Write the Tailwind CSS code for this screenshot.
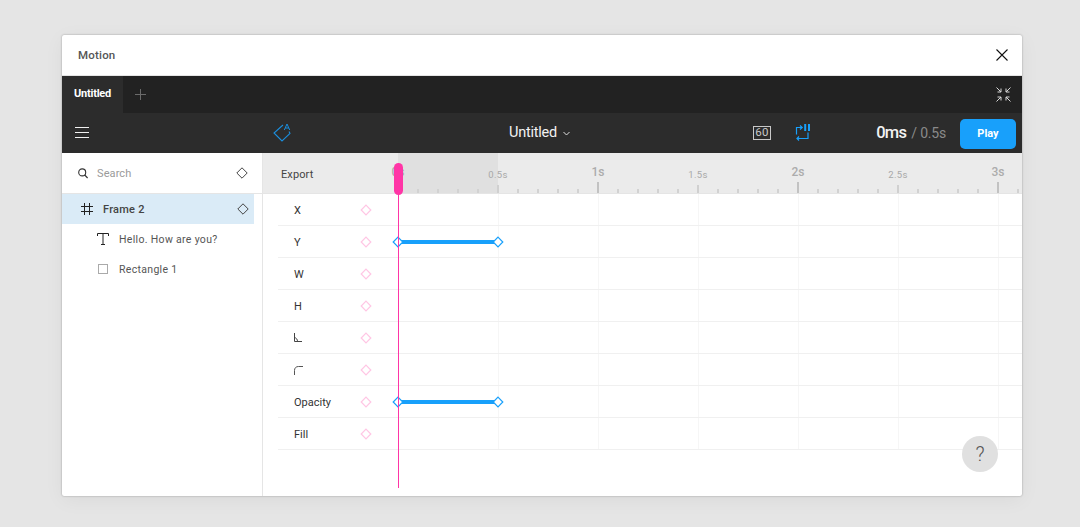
<!doctype html>
<html>
<head>
<meta charset="utf-8">
<script src="https://cdn.jsdelivr.net/npm/@tailwindcss/browser@4"></script>
</head>
<body class="m-0 w-[1080px] h-[527px] overflow-hidden bg-[#e5e5e5] font-['Roboto','Liberation_Sans',sans-serif]">
<div class="pt-[35px] pl-[62px]">
<div class="w-[960px] h-[461px] bg-white flex flex-col shadow-[0_0_2px_rgba(0,0,0,0.35),0_4px_20px_rgba(0,0,0,0.05)] rounded-[2px] overflow-hidden">
  <!-- title -->
  <div class="h-[41px] shrink-0 flex items-center justify-between pl-4 pr-[14px] border-b border-[#e5e5e5]">
    <span class="mt-[1px] text-[11.5px] font-medium text-[#555] tracking-[0.2px]">Motion</span>
    <svg class="w-[12px] h-[12px]" viewBox="0 0 12 12" fill="none" stroke="#111" stroke-width="1.1"><path d="M0.5 0.5L11.5 11.5M11.5 0.5L0.5 11.5"/></svg>
  </div>
  <!-- tabs -->
  <div class="h-[37px] shrink-0 bg-[#222222] flex items-center">
    <div class="h-full w-[61px] bg-[#2c2c2c] flex items-center justify-center text-white text-[11px] font-bold tracking-[-0.2px]">Untitled</div>
    <svg class="w-[11px] h-[11px] ml-[12px]" viewBox="0 0 11 11" stroke="#6b6b6b" stroke-width="1"><path d="M5.5 0V11M0 5.5H11"/></svg>
    <svg class="w-[15px] h-[15px] ml-auto mr-[11px]" viewBox="0 0 15 15" fill="none" stroke="#d8d8d8" stroke-width="1"><path d="M0.5 0.5L5 5M5 1.5V5H1.5M14.5 0.5L10 5M10 1.5V5H13.5M0.5 14.5L5 10M5 13.5V10H1.5M14.5 14.5L10 10M10 13.5V10H13.5"/></svg>
  </div>
  <!-- toolbar -->
  <div class="h-[40px] shrink-0 bg-[#2c2c2c] flex items-center relative">
    <svg class="absolute left-[13px] top-[14px] w-[14px] h-[11px]" viewBox="0 0 14 11" stroke="#f0f0f0" stroke-width="1"><path d="M0 0.5H14M0 5.5H14M0 10.5H14"/></svg>
    <svg class="absolute left-[210px] top-[8px] w-[20px] h-[22px]" viewBox="0 0 20 22" fill="none" stroke="#1b8ddb" stroke-width="1.1"><path d="M11 4L2 12L10 20L18 12.5L17 10.5"/><path d="M12.3 9L15 3L17.7 9M13.3 7H16.7" stroke-width="1"/></svg>
    <div class="absolute left-[447px] top-0 h-full flex items-center gap-[6px] text-white">
      <span class="text-[14.5px] tracking-[-0.25px] text-[#f2f2f2]">Untitled</span>
      <svg class="w-[7px] h-[5px]" viewBox="0 0 7 5" fill="none" stroke="#ddd" stroke-width="1"><path d="M0.5 1L3.5 4L6.5 1"/></svg>
    </div>
    <div class="absolute left-[691px] top-[13px] w-[18px] h-[14px] border border-[#c8c8c8] flex items-center justify-center text-[11.5px] text-[#c8c8c8] leading-none tracking-[0.4px]">60</div>
    <svg class="absolute left-[733px] top-[10px] w-[16px] h-[19px]" viewBox="0 0 16 19" fill="none" stroke="#18a0fb" stroke-width="1.2"><path d="M1.5 11.5V4.5H7M5 2.5L7.2 4.5L5 6.5M13 9.5V15.5H2M4 13.5L2 15.5L4 17.5"/><path d="M10.2 1V8M14 1V8" stroke-width="2"/></svg>
    <div class="absolute right-[76px] top-0 h-full flex items-center gap-[5px]">
      <span class="text-[16.5px] font-medium text-[#f2f2f2] tracking-[-0.7px]">0ms</span>
      <span class="text-[14px] text-[#8a8a8a] tracking-[-0.2px]">/ 0.5s</span>
    </div>
    <div class="absolute left-[898px] top-[6px] w-[56px] h-[30px] rounded-[5px] bg-[#18a0fb] flex items-center justify-center text-white text-[11px] font-bold">Play</div>
  </div>
  <!-- body -->
  <div class="flex-1 flex min-h-0">
    <!-- layers -->
    <div class="w-[201px] shrink-0 border-r border-[#e5e5e5]">
      <div class="h-[41px] flex items-center border-b border-[#e5e5e5] relative">
        <svg class="absolute left-[16px] top-[15px] w-[10px] h-[11px]" viewBox="0 0 10 11" fill="none" stroke="#333" stroke-width="1.1"><circle cx="4.2" cy="4.4" r="3.5"/><path d="M6.7 7L9.6 10"/></svg>
        <span class="ml-[35px] mt-[2px] text-[11px] text-[#9a9a9a] tracking-[0.1px]">Search</span>
        <svg class="absolute left-[174px] top-[14px] w-[12px] h-[12px]" viewBox="0 0 12 12" fill="none" stroke="#444" stroke-width="1"><path d="M6 0.8L11.2 6L6 11.2L0.8 6Z"/></svg>
      </div>
      <div class="w-[192px] h-[30px] bg-[#daebf7] flex items-center relative">
        <svg class="absolute left-[19px] top-[9px] w-[12px] h-[12px]" viewBox="0 0 12 12" fill="none" stroke="#222" stroke-width="1"><path d="M3.5 0V12M8.5 0V12M0 3.5H12M0 8.5H12"/></svg>
        <span class="ml-[41px] mt-[2px] text-[11px] font-medium text-[#444] tracking-[0.25px]">Frame 2</span>
        <svg class="absolute left-[175px] top-[9px] w-[12px] h-[12px]" viewBox="0 0 12 12" fill="none" stroke="#444" stroke-width="1"><path d="M6 0.8L11.2 6L6 11.2L0.8 6Z"/></svg>
      </div>
      <div class="h-[30px] flex items-center relative">
        <svg class="absolute left-[35px] top-[9px] w-[12px] h-[12px]" viewBox="0 0 12 12" fill="none" stroke="#222" stroke-width="1"><path d="M0.5 3V0.5H11.5V3M6 0.5V11.5M4 11.5H8"/></svg>
        <span class="ml-[57px] mt-[2px] text-[10.5px] text-[#555] tracking-[0.32px]">Hello. How are you?</span>
      </div>
      <div class="h-[30px] flex items-center relative">
        <div class="absolute left-[36px] top-[10px] w-[10px] h-[10px] border border-[#aaa]"></div>
        <span class="ml-[57px] mt-[2px] text-[10.5px] text-[#555] tracking-[0.32px]">Rectangle 1</span>
      </div>
    </div>
    <!-- timeline -->
    <div class="flex-1 relative min-w-0">
      <!-- ruler -->
      <div class="h-[41px] bg-[#ebebeb] border-b border-[#e5e5e5] relative">
        <span class="absolute left-[18px] top-[14px] text-[11px] text-[#444] tracking-[0.1px]">Export</span>
        <div class="absolute left-[135px] top-0 w-[100px] h-full bg-[#e0e0e0]"></div>
        <div class="absolute left-[134px] right-0 bottom-0 h-[4px] bg-[repeating-linear-gradient(90deg,#d2d2d2_0,#d2d2d2_2px,transparent_2px,transparent_20px)]"></div>
        <div class="absolute left-[234px] right-0 bottom-0 h-[8px] bg-[repeating-linear-gradient(90deg,#d0d0d0_0,#d0d0d0_2px,transparent_2px,transparent_100px)]"></div>
        <div class="absolute left-[334px] right-0 bottom-0 h-[11px] bg-[repeating-linear-gradient(90deg,#c2c2c2_0,#c2c2c2_2px,transparent_2px,transparent_200px)]"></div>
        <span class="absolute left-[125px] top-[10px] w-[20px] text-center text-[12px] font-medium text-[#acacac]">0s</span>
        <span class="absolute left-[225px] top-[15px] w-[20px] text-center text-[9.5px] text-[#a8a8a8] tracking-[0.3px]">0.5s</span>
        <span class="absolute left-[325px] top-[10px] w-[20px] text-center text-[12px] font-medium text-[#acacac]">1s</span>
        <span class="absolute left-[425px] top-[15px] w-[20px] text-center text-[9.5px] text-[#a8a8a8] tracking-[0.3px]">1.5s</span>
        <span class="absolute left-[525px] top-[10px] w-[20px] text-center text-[12px] font-medium text-[#acacac]">2s</span>
        <span class="absolute left-[625px] top-[15px] w-[20px] text-center text-[9.5px] text-[#a8a8a8] tracking-[0.3px]">2.5s</span>
        <span class="absolute left-[725px] top-[10px] w-[20px] text-center text-[12px] font-medium text-[#acacac]">3s</span>
      </div>
      <!-- rows -->
      <div class="relative pl-[15px]">
        <div class="absolute left-[235px] top-0 right-0 h-[256px] bg-[repeating-linear-gradient(90deg,#f6f6f6_0,#f6f6f6_1px,transparent_1px,transparent_100px)]"></div>
        <div class="relative h-[32px] border-b border-[#f0f0f0] flex items-center pl-[16px] pt-[4px] text-[11px] text-[#333]">X<svg class="absolute left-[82px] top-[10px] w-[12px] h-[12px]" viewBox="0 0 12 12" fill="none" stroke="#ffc6e4" stroke-width="1.2"><path d="M6 1.2L10.8 6L6 10.8L1.2 6Z"/></svg></div>
        <div class="relative h-[32px] border-b border-[#f0f0f0] flex items-center pl-[16px] pt-[4px] text-[11px] text-[#333]">Y<svg class="absolute left-[82px] top-[10px] w-[12px] h-[12px]" viewBox="0 0 12 12" fill="none" stroke="#ffc6e4" stroke-width="1.2"><path d="M6 1.2L10.8 6L6 10.8L1.2 6Z"/></svg>
          <svg class="absolute left-[114px] top-[10px] w-[112px] h-[12px]" viewBox="0 0 112 12" fill="none"><path d="M6 6H106" stroke="#18a0fb" stroke-width="4"/><path d="M6 1.2L10.8 6L6 10.8L1.2 6Z M106 1.2L110.8 6L106 10.8L101.2 6Z" fill="#fff" stroke="#18a0fb" stroke-width="1.2"/></svg></div>
        <div class="relative h-[32px] border-b border-[#f0f0f0] flex items-center pl-[16px] pt-[4px] text-[11px] text-[#333]">W<svg class="absolute left-[82px] top-[10px] w-[12px] h-[12px]" viewBox="0 0 12 12" fill="none" stroke="#ffc6e4" stroke-width="1.2"><path d="M6 1.2L10.8 6L6 10.8L1.2 6Z"/></svg></div>
        <div class="relative h-[32px] border-b border-[#f0f0f0] flex items-center pl-[16px] pt-[4px] text-[11px] text-[#333]">H<svg class="absolute left-[82px] top-[10px] w-[12px] h-[12px]" viewBox="0 0 12 12" fill="none" stroke="#ffc6e4" stroke-width="1.2"><path d="M6 1.2L10.8 6L6 10.8L1.2 6Z"/></svg></div>
        <div class="relative h-[32px] border-b border-[#f0f0f0] flex items-center pl-[16px]"><svg class="w-[8px] h-[9px]" viewBox="0 0 8 9" fill="none" stroke="#444" stroke-width="1"><path d="M0.5 0V8.5H8M0.5 4.5C2.5 5 3.5 6.5 3.5 8.5"/></svg><svg class="absolute left-[82px] top-[10px] w-[12px] h-[12px]" viewBox="0 0 12 12" fill="none" stroke="#ffc6e4" stroke-width="1.2"><path d="M6 1.2L10.8 6L6 10.8L1.2 6Z"/></svg></div>
        <div class="relative h-[32px] border-b border-[#f0f0f0] flex items-center pl-[16px] pt-[1px]"><svg class="w-[9px] h-[9px]" viewBox="0 0 9 9" fill="none" stroke="#555" stroke-width="1"><path d="M0.5 9V4.5C0.5 2 2 0.5 4.5 0.5H9"/></svg><svg class="absolute left-[82px] top-[10px] w-[12px] h-[12px]" viewBox="0 0 12 12" fill="none" stroke="#ffc6e4" stroke-width="1.2"><path d="M6 1.2L10.8 6L6 10.8L1.2 6Z"/></svg></div>
        <div class="relative h-[32px] border-b border-[#f0f0f0] flex items-center pl-[16px] pt-[4px] text-[11px] text-[#333]">Opacity<svg class="absolute left-[82px] top-[10px] w-[12px] h-[12px]" viewBox="0 0 12 12" fill="none" stroke="#ffc6e4" stroke-width="1.2"><path d="M6 1.2L10.8 6L6 10.8L1.2 6Z"/></svg>
          <svg class="absolute left-[114px] top-[10px] w-[112px] h-[12px]" viewBox="0 0 112 12" fill="none"><path d="M6 6H106" stroke="#18a0fb" stroke-width="4"/><path d="M6 1.2L10.8 6L6 10.8L1.2 6Z M106 1.2L110.8 6L106 10.8L101.2 6Z" fill="#fff" stroke="#18a0fb" stroke-width="1.2"/></svg></div>
        <div class="relative h-[32px] border-b border-[#f0f0f0] flex items-center pl-[16px] pt-[4px] text-[11px] text-[#333]">Fill<svg class="absolute left-[82px] top-[10px] w-[12px] h-[12px]" viewBox="0 0 12 12" fill="none" stroke="#ffc6e4" stroke-width="1.2"><path d="M6 1.2L10.8 6L6 10.8L1.2 6Z"/></svg></div>
      </div>
      <!-- playhead -->
      <div class="absolute left-[135px] top-[10px] w-px h-[325px] bg-[#ff35a6]"></div>
      <div class="absolute left-[131px] top-[10px] w-[9px] h-[32px] rounded-[5px] bg-[#ff35a6]"></div>
      <!-- help -->
      <div class="absolute left-[699px] top-[283px] w-[36px] h-[36px] rounded-full bg-[#e0e0e0] flex items-center justify-center text-[20px] font-light text-[#555]">?</div>
    </div>
  </div>
</div>
</div>
</body>
</html>
